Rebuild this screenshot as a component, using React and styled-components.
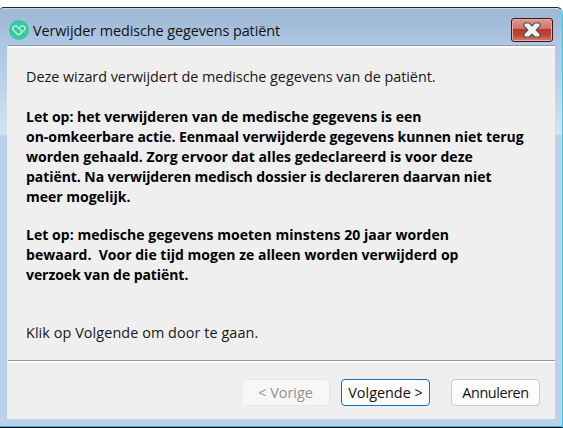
import React from "react";
import styled, { createGlobalStyle } from "styled-components";

const GlobalStyle = createGlobalStyle`
  * {
    box-sizing: border-box;
  }
  body {
    margin: 0;
    background: #fff;
    overflow: hidden;
  }
`;

const Screen = styled.div`
  width: 563px;
  height: 428px;
  padding-top: 7px;
  font-family: "Open Sans", "Noto Sans", sans-serif;
  font-size: 14.4px;
  color: #111;
`;

const Window = styled.div`
  display: flex;
  flex-direction: column;
  height: 421px;
  padding: 0 7px 8px 7px;
  border-top: 1px solid #20252d;
  border-right: 1px solid #35c8f0;
  border-bottom: 1px solid #06141f;
  border-radius: 4px 6px 0 0;
  background: linear-gradient(
    #a0b9d4 0px,
    #a1bbd8 12px,
    #afc7e2 36px,
    #b4cce6 60px,
    #d6e4f3 126px,
    #b9d1ea 128px,
    #b9d1ea 100%
  );
  box-shadow: inset 0 1px #c9d9e9, inset 0 -1px #45aabd;
`;

const TitleBar = styled.header`
  display: flex;
  align-items: flex-start;
  height: 37px;
  padding: 0 2px 0 2px;
`;

const Logo = styled.svg`
  width: 20px;
  height: 20px;
  margin-top: 12px;
  flex: none;
`;

const Title = styled.h1`
  flex: 1;
  margin: 13px 0 0 4px;
  font-size: 14.4px;
  font-weight: 400;
  line-height: 20px;
  letter-spacing: ${props => props.$tracking}px;
  white-space: nowrap;
`;

const CloseButton = styled.button`
  display: flex;
  align-items: center;
  justify-content: center;
  width: 42px;
  height: 24px;
  margin-top: 10px;
  padding: 0;
  border: 1px solid #45141b;
  border-radius: 3px;
  background: linear-gradient(#df9d92, #cd776b 43%, #b9382a 44%, #bd4936 75%, #d28770);
  box-shadow: inset 0 0 0 1px #e7aaa3;
`;

const Body = styled.main`
  display: flex;
  flex-direction: column;
  flex: 1;
  border-top: 1px solid #8d9db1;
  border-left: 1px solid #efefef;
  background: #efefef;
  box-shadow: inset 0 2px #fcfcfc;
`;

const Content = styled.section`
  height: 314px;
  padding: 21px 19px 0 18px;
`;

const Paragraph = styled.p`
  margin: 0 0 ${props => props.$gap || 0}px;
  color: ${props => (props.$bold ? "#000" : "#171717")};
  font-size: ${props => (props.$bold ? "14px" : "14.4px")};
  font-weight: ${props => (props.$bold ? 700 : 400)};
  line-height: 20px;
`;

const Line = styled.span`
  display: block;
  white-space: pre;
  letter-spacing: ${props => props.$tracking || 0}px;
`;

const Footer = styled.footer`
  display: flex;
  justify-content: flex-end;
  align-items: flex-start;
  flex: 1;
  padding: 18px 15px 0 0;
  border-top: 1px solid #999;
  box-shadow: inset 0 2px #fcfcfc;
`;

const Button = styled.button`
  width: 89px;
  height: 27px;
  margin-left: ${props => props.$gap || 0}px;
  padding: 0 0 1px;
  border: 1px solid ${props => (props.$primary ? "#0a75b7" : "#cacaca")};
  border-radius: 4px;
  background: #fdfdfd;
  color: #111;
  font: inherit;
  letter-spacing: ${props => props.$tracking || 0}px;
  white-space: nowrap;

  &:disabled {
    border-color: #e8e8e8;
    background: #f7f7f7;
    color: #929292;
  }
`;

const warning = [
  ["Let op: het verwijderen van de medische gegevens is een", 0],
  ["on-omkeerbare actie. Eenmaal verwijderde gegevens kunnen niet terug", -0.04],
  ["worden gehaald. Zorg ervoor dat alles gedeclareerd is voor deze", 0.03],
  ["patiënt. Na verwijderen medisch dossier is declareren daarvan niet", -0.06],
  ["meer mogelijk.", 0]
];

const retention = [
  ["Let op: medische gegevens moeten minstens 20 jaar worden", 0.05],
  ["bewaard.  Voor die tijd mogen ze alleen worden verwijderd op", 0.02],
  ["verzoek van de patiënt.", -0.07]
];

function Lines({ items }) {
  return items.map(([text, tracking]) => (
    <Line key={text} $tracking={tracking}>
      {text}
    </Line>
  ));
}

export default function App() {
  return (
    <Screen>
      <GlobalStyle />
      <Window>
        <TitleBar>
          <Logo viewBox="0 0 20 20" fill="none">
            <circle cx="10" cy="10" r="10" fill="#35c99b" />
            <path
              d="M12.4 10.9 8.4 6.9C7 5.5 5.2 5.7 4.3 6.9c-.9 1.3-.7 2.6.4 3.7L8.5 14.3c.8.7 1.5.7 2.3 0l4.4-4.2c1.1-1.1 1.1-2.5.2-3.5-1-1.1-2.7-1-3.7 0l-1 1"
              stroke="#c9f7e6"
              strokeWidth="1.3"
              strokeLinecap="round"
              strokeLinejoin="round"
            />
          </Logo>
          <Title $tracking={-0.08}>Verwijder medische gegevens patiënt</Title>
          <CloseButton aria-label="Sluiten">
            <svg width="18" height="16" viewBox="0 0 18 16">
              <path
                d="M2 1h4.2L9 3.8 11.8 1H16l1 1v2.2L13.2 8l3.8 3.8V14l-1 1h-4.2L9 12.2 6.2 15H2l-1-1v-2.2L4.8 8 1 4.2V2z"
                fill="#f2f2f4"
                stroke="#54515b"
                strokeWidth="1.2"
                strokeLinejoin="round"
              />
            </svg>
          </CloseButton>
        </TitleBar>
        <Body>
          <Content>
            <Paragraph $gap={20}>
              <Line $tracking={-0.03}>
                Deze wizard verwijdert de medische gegevens van de patiënt.
              </Line>
            </Paragraph>
            <Paragraph $bold $gap={18}>
              <Lines items={warning} />
            </Paragraph>
            <Paragraph $bold $gap={38}>
              <Lines items={retention} />
            </Paragraph>
            <Paragraph>
              <Line $tracking={0.08}>Klik op Volgende om door te gaan.</Line>
            </Paragraph>
          </Content>
          <Footer>
            <Button disabled>&lt; Vorige</Button>
            <Button $primary $gap={11}>Volgende &gt;</Button>
            <Button $gap={21} $tracking={-0.4}>Annuleren</Button>
          </Footer>
        </Body>
      </Window>
    </Screen>
  );
}
